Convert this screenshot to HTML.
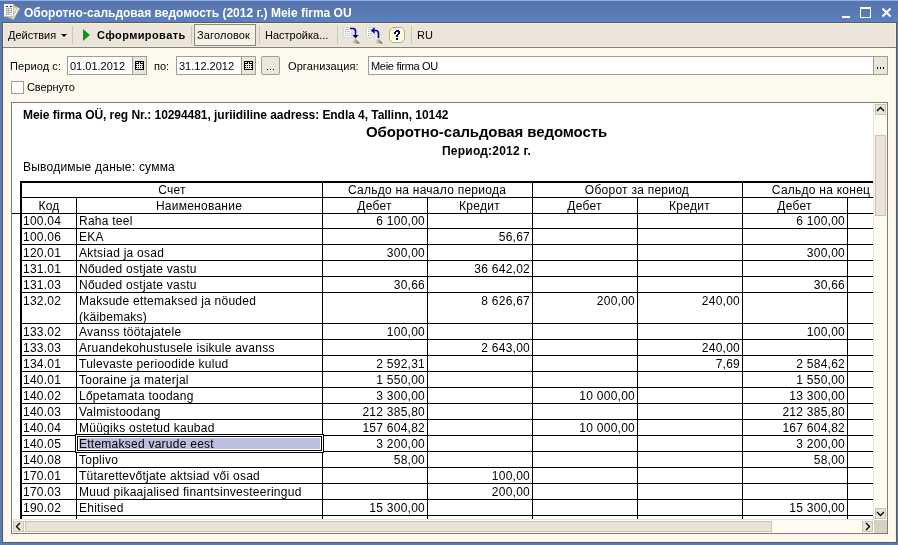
<!DOCTYPE html>
<html><head><meta charset="utf-8">
<style>
*{margin:0;padding:0;box-sizing:border-box}
html,body{width:898px;height:545px;overflow:hidden;background:#5b7cb6}
body{position:relative;font-family:"Liberation Sans",sans-serif;color:#000}
.a{position:absolute}
.t{position:absolute;white-space:nowrap;font-size:11px;line-height:13px}
.r{position:absolute;white-space:nowrap;font-size:12px;line-height:14px;letter-spacing:0.25px}
.hl{position:absolute;height:1px;background:#000}
.vl{position:absolute;width:1px;background:#000}
.num{text-align:right}
.sep{position:absolute;top:26px;width:1px;height:18px;background:#cbc6b6}
.t,.r{will-change:transform}
</style></head><body>

<div class="a" style="left:0;top:0;width:898px;height:1px;background:#8fb0ea"></div>
<div class="a" style="left:0;top:1px;width:898px;height:1px;background:#5775ad"></div>
<div class="a" style="left:0;top:2px;width:898px;height:20px;background:linear-gradient(#5874ad,#5a7bb5 60%,#5c7fc0)"></div>
<svg class="a" style="left:0;top:0" width="22" height="22" viewBox="0 0 22 22">
<path d="M14 5.5L19.8 8.6L13.6 19.4L8.2 17.4Z" fill="#f4f2ea" stroke="#b0a890" stroke-width="0.8"/>
<path d="M12 5L17 8.5L12 18L7 16Z" fill="#e8e6de" stroke="#a8a088" stroke-width="0.6"/>
<rect x="4" y="4" width="10" height="13" fill="#fbfbf6"/>
<path d="M4 16.5H14M13.5 4V17" stroke="#c8c0a8" stroke-width="1"/>
</svg>
<svg class="a" style="left:6px;top:6px" width="6" height="1" shape-rendering="crispEdges"><path d="M0 0h2v1h-2zM4 0h2v1h-2z" fill="#101090"/></svg>
<svg class="a" style="left:6px;top:8px" width="6" height="7" shape-rendering="crispEdges"><path d="M0 0h6v1h-6zM0 1h1v1h-1zM2 1h1v1h-1zM5 1h1v1h-1zM0 2h6v1h-6zM0 3h1v1h-1zM2 3h1v1h-1zM5 3h1v1h-1zM0 4h6v1h-6zM0 5h1v1h-1zM2 5h1v1h-1zM0 6h3v1h-3z" fill="#b4b4ae"/><path d="M3 6h3v1h-3z" fill="#d8d8d2"/></svg>
<div class="a" style="left:24px;top:5px;font-size:12px;line-height:16px;font-weight:bold;color:#fff;white-space:nowrap;will-change:transform">Оборотно-сальдовая ведомость (2012 г.) Meie firma OU</div>
<div class="a" style="left:842px;top:16px;width:8px;height:2px;background:#fff"></div>
<div class="a" style="left:860px;top:7px;width:11px;height:11px;border:1px solid #fff;border-top-width:2px"></div>
<svg class="a" style="left:881px;top:7px" width="11" height="11" viewBox="0 0 11 11"><path d="M1.5 1.5L9.5 9.5M9.5 1.5L1.5 9.5" stroke="#fff" stroke-width="2"/></svg>
<div class="a" style="left:2px;top:22px;width:895px;height:521px;background:#fef9ee;border:1px solid #5f5c55"></div>
<div class="a" style="left:3px;top:23px;width:893px;height:519px;border:1px solid #f5f0e4"></div>
<div class="a" style="left:4px;top:24px;width:891px;height:22px;background:#ebe5da"></div>
<div class="a" style="left:3px;top:46px;width:893px;height:1px;background:#efeadf"></div>
<div class="a" style="left:3px;top:47px;width:893px;height:1px;background:#858073"></div>
<div class="t" style="left:8px;top:29px">Действия</div>
<svg class="a" style="left:61px;top:34px" width="6" height="3"><path d="M0 0H6L3 3Z" fill="#000"/></svg>
<div class="sep" style="left:72px"></div>
<svg class="a" style="left:83px;top:29px" width="7" height="12"><path d="M0 0L7 6L0 12Z" fill="#17901a"/></svg>
<div class="t" style="left:97px;top:29px;font-weight:bold;letter-spacing:0.4px">Сформировать</div>
<div class="sep" style="left:191px"></div>
<div class="a" style="left:194px;top:24px;width:62px;height:22px;background:#f5f1e7;border:1px solid #8d897e"></div>
<div class="t" style="left:197px;top:29px;letter-spacing:0.15px">Заголовок</div>
<div class="sep" style="left:259px"></div>
<div class="t" style="left:265px;top:29px">Настройка...</div>
<div class="sep" style="left:337px"></div>
<svg class="a" style="left:342px;top:26px" width="20" height="19" viewBox="0 0 20 19">
<defs><linearGradient id="tg" x1="0" x2="1" y1="0" y2="0"><stop offset="0" stop-color="#f8f4c0"/><stop offset="0.5" stop-color="#b8b490"/><stop offset="1" stop-color="#505040"/></linearGradient></defs>
<rect x="1.5" y="1.5" width="8" height="10" fill="#fff" stroke="#d4d8dc" stroke-width="1"/>
<path d="M3 3.5H8" stroke="#c8c8c8"/>
<path d="M3 5.5H4M3 7.5H4M3 9.5H4" stroke="#40c0c8"/>
<path d="M5 5.5H8M5 7.5H8M5 9.5H8" stroke="#c8c8c8"/>
<path d="M8 2.5H11Q13.5 2.5 13.5 5V10" fill="none" stroke="#0000a0" stroke-width="1.6"/>
<path d="M10.5 9L16.5 9L13.5 12.5Z" fill="#0000a0"/>
<path d="M9 17.5L13.5 12.5L18 17.5Z" fill="url(#tg)"/>
</svg>
<svg class="a" style="left:365px;top:26px" width="20" height="19" viewBox="0 0 20 19">
<rect x="1.5" y="1.5" width="8" height="10" fill="#fff" stroke="#d4d8dc" stroke-width="1"/>
<path d="M3 3.5H8" stroke="#c8c8c8"/>
<path d="M3 5.5H4M3 7.5H4M3 9.5H4" stroke="#40c0c8"/>
<path d="M5 5.5H8M5 7.5H8M5 9.5H8" stroke="#c8c8c8"/>
<path d="M8 4.5H10.5Q13.5 4.5 13.5 7.5V12" fill="none" stroke="#0000a0" stroke-width="1.6"/>
<path d="M9.5 1L6 4.5L9.5 8Z" fill="#0000a0"/>
<path d="M9 17.5L13.5 12.5L18 17.5Z" fill="url(#tg)"/>
</svg>
<svg class="a" style="left:389px;top:27px" width="16" height="16" shape-rendering="crispEdges"><path d="M3 0h10v1h-10zM2 1h1v1h-1zM13 1h1v1h-1zM1 2h1v1h-1zM14 2h1v1h-1zM0 3h1v1h-1zM15 3h1v1h-1zM0 4h1v1h-1zM15 4h1v1h-1zM0 5h1v1h-1zM15 5h1v1h-1zM0 6h1v1h-1zM15 6h1v1h-1zM0 7h1v1h-1zM15 7h1v1h-1zM0 8h1v1h-1zM15 8h1v1h-1zM0 9h1v1h-1zM15 9h1v1h-1zM0 10h1v1h-1zM15 10h1v1h-1zM0 11h1v1h-1zM15 11h1v1h-1zM0 12h1v1h-1zM15 12h1v1h-1zM1 13h1v1h-1zM14 13h1v1h-1zM2 14h1v1h-1zM13 14h1v1h-1zM3 15h10v1h-10z" fill="#aeaca4"/><path d="M3 1h10v1h-10zM2 2h12v1h-12zM1 3h14v1h-14zM1 4h14v1h-14zM1 5h14v1h-14zM1 6h14v1h-14zM1 7h14v1h-14zM1 8h14v1h-14zM1 9h14v1h-14zM1 10h14v1h-14zM1 11h14v1h-14zM1 12h14v1h-14zM2 13h12v1h-12zM3 14h10v1h-10z" fill="#fefcd2"/></svg>
<svg class="a" style="left:394px;top:30px" width="7" height="10" shape-rendering="crispEdges"><path d="M2 0h3v1h-3zM1 1h5v1h-5zM0 2h2v1h-2zM4 2h2v1h-2zM0 3h2v1h-2zM4 3h2v1h-2zM3 4h2v1h-2zM2 5h2v1h-2zM2 6h2v1h-2zM2 8h2v1h-2zM2 9h2v1h-2z" fill="#000090"/></svg>
<div class="sep" style="left:411px"></div>
<div class="t" style="left:417px;top:29px">RU</div>
<div class="t" style="left:10px;top:60px;letter-spacing:0.1px">Период с:</div>
<div class="a" style="left:67px;top:56px;width:80px;height:19px;background:#fff;border:1px solid #a29d8c"></div>
<div class="a" style="left:132px;top:57px;width:14px;height:17px;background:#ebe6db;border-left:1px solid #a29d8c"></div>
<svg class="a" style="left:135px;top:61px" width="9" height="9" shape-rendering="crispEdges"><path d="M0 0h9v1h-9zM0 1h1v1h-1zM3 1h1v1h-1zM5 1h1v1h-1zM8 1h1v1h-1zM0 2h4v1h-4zM5 2h4v1h-4zM0 3h1v1h-1zM8 3h1v1h-1zM0 4h2v1h-2zM3 4h1v1h-1zM5 4h1v1h-1zM7 4h2v1h-2zM0 5h1v1h-1zM8 5h1v1h-1zM0 6h2v1h-2zM3 6h1v1h-1zM5 6h1v1h-1zM7 6h2v1h-2zM0 7h1v1h-1zM8 7h1v1h-1zM0 8h9v1h-9z" fill="#000"/><path d="M1 1h2v1h-2zM4 1h1v1h-1zM6 1h2v1h-2zM4 2h1v1h-1zM1 3h7v1h-7zM2 4h1v1h-1zM4 4h1v1h-1zM6 4h1v1h-1zM1 5h7v1h-7zM2 6h1v1h-1zM4 6h1v1h-1zM6 6h1v1h-1zM1 7h7v1h-7z" fill="#f2eee4"/></svg>
<div class="t" style="left:70px;top:60px">01.01.2012</div>
<div class="t" style="left:154px;top:60px">по:</div>
<div class="a" style="left:176px;top:56px;width:80px;height:19px;background:#fff;border:1px solid #a29d8c"></div>
<div class="a" style="left:241px;top:57px;width:14px;height:17px;background:#ebe6db;border-left:1px solid #a29d8c"></div>
<svg class="a" style="left:244px;top:61px" width="9" height="9" shape-rendering="crispEdges"><path d="M0 0h9v1h-9zM0 1h1v1h-1zM3 1h1v1h-1zM5 1h1v1h-1zM8 1h1v1h-1zM0 2h4v1h-4zM5 2h4v1h-4zM0 3h1v1h-1zM8 3h1v1h-1zM0 4h2v1h-2zM3 4h1v1h-1zM5 4h1v1h-1zM7 4h2v1h-2zM0 5h1v1h-1zM8 5h1v1h-1zM0 6h2v1h-2zM3 6h1v1h-1zM5 6h1v1h-1zM7 6h2v1h-2zM0 7h1v1h-1zM8 7h1v1h-1zM0 8h9v1h-9z" fill="#000"/><path d="M1 1h2v1h-2zM4 1h1v1h-1zM6 1h2v1h-2zM4 2h1v1h-1zM1 3h7v1h-7zM2 4h1v1h-1zM4 4h1v1h-1zM6 4h1v1h-1zM1 5h7v1h-7zM2 6h1v1h-1zM4 6h1v1h-1zM6 6h1v1h-1zM1 7h7v1h-7z" fill="#f2eee4"/></svg>
<div class="t" style="left:179px;top:60px">31.12.2012</div>
<div class="a" style="left:261px;top:56px;width:19px;height:19px;background:#ebe7dc;border:1px solid #a29d8c;border-radius:2px"></div>
<svg class="a" style="left:267px;top:69px" width="7" height="1" shape-rendering="crispEdges"><path d="M0 0h1v1h-1zM3 0h1v1h-1zM6 0h1v1h-1z" fill="#000"/></svg>
<div class="t" style="left:288px;top:60px;letter-spacing:0.1px">Организация:</div>
<div class="a" style="left:368px;top:56px;width:520px;height:19px;background:#fff;border:1px solid #a29d8c"></div>
<div class="a" style="left:873px;top:57px;width:14px;height:17px;background:#ebe6db;border-left:1px solid #a29d8c"></div>
<svg class="a" style="left:877px;top:67px" width="7" height="2" shape-rendering="crispEdges"><path d="M0 0h1v1h-1zM3 0h1v1h-1zM6 0h1v1h-1zM0 1h1v1h-1zM3 1h1v1h-1zM6 1h1v1h-1z" fill="#000"/></svg>
<div class="t" style="left:371px;top:60px;letter-spacing:-0.3px">Meie firma OU</div>
<div class="a" style="left:11px;top:81px;width:13px;height:13px;background:#fff;border:1px solid #a29d8c"></div>
<div class="t" style="left:27px;top:81px;letter-spacing:-0.1px">Свернуто</div>
<div class="a" style="left:11px;top:102px;width:877px;height:432px;background:#fff;border:1px solid #807c70"></div>
<div class="r" style="left:23px;top:108px;font-weight:bold;letter-spacing:-0.05px">Meie firma OÜ, reg Nr.: 10294481, juriidiline aadress: Endla 4, Tallinn, 10142</div>
<div class="r" style="left:366px;top:123px;font-size:15px;line-height:17px;font-weight:bold;letter-spacing:-0.1px">Оборотно-сальдовая ведомость</div>
<div class="r" style="left:442px;top:144px;font-weight:bold;letter-spacing:0.22px">Период:2012 г.</div>
<div class="r" style="left:23px;top:160px;letter-spacing:0.22px">Выводимые даные: сумма</div>
<div class="a" style="left:12px;top:103px;width:861px;height:416px;overflow:hidden">
<div class="a" style="left:8px;top:78px;width:2px;height:338px;background:#000"></div>
<div class="a" style="left:8px;top:78px;width:932px;height:2px;background:#000"></div>
<div class="hl" style="left:8px;top:94px;width:932px"></div>
<div class="hl" style="left:0px;top:110px;width:940px"></div>
<div class="hl" style="left:8px;top:125px;width:932px"></div>
<div class="hl" style="left:8px;top:141px;width:932px"></div>
<div class="hl" style="left:8px;top:157px;width:932px"></div>
<div class="hl" style="left:8px;top:173px;width:932px"></div>
<div class="hl" style="left:8px;top:189px;width:932px"></div>
<div class="hl" style="left:8px;top:220px;width:932px"></div>
<div class="hl" style="left:8px;top:236px;width:932px"></div>
<div class="hl" style="left:8px;top:252px;width:932px"></div>
<div class="hl" style="left:8px;top:268px;width:932px"></div>
<div class="hl" style="left:8px;top:284px;width:932px"></div>
<div class="hl" style="left:8px;top:300px;width:932px"></div>
<div class="hl" style="left:8px;top:316px;width:932px"></div>
<div class="hl" style="left:8px;top:332px;width:932px"></div>
<div class="hl" style="left:8px;top:348px;width:932px"></div>
<div class="hl" style="left:8px;top:364px;width:932px"></div>
<div class="hl" style="left:8px;top:380px;width:932px"></div>
<div class="hl" style="left:8px;top:396px;width:932px"></div>
<div class="hl" style="left:8px;top:412px;width:932px"></div>
<div class="vl" style="left:64px;top:94px;height:322px"></div>
<div class="vl" style="left:310px;top:78px;height:338px"></div>
<div class="vl" style="left:415px;top:94px;height:322px"></div>
<div class="vl" style="left:520px;top:78px;height:338px"></div>
<div class="vl" style="left:625px;top:94px;height:322px"></div>
<div class="vl" style="left:730px;top:78px;height:338px"></div>
<div class="vl" style="left:835px;top:94px;height:322px"></div>
<div class="r" style="left:10px;top:80px;width:300px;text-align:center;">Счет</div>
<div class="r" style="left:310px;top:80px;width:210px;text-align:center;">Сальдо на начало периода</div>
<div class="r" style="left:520px;top:80px;width:210px;text-align:center;">Оборот за период</div>
<div class="r" style="left:730px;top:80px;width:210px;text-align:center;">Сальдо на конец периода</div>
<div class="r" style="left:10px;top:96px;width:54px;text-align:center;">Код</div>
<div class="r" style="left:64px;top:96px;width:246px;text-align:center;">Наименование</div>
<div class="r" style="left:310px;top:96px;width:105px;text-align:center;">Дебет</div>
<div class="r" style="left:415px;top:96px;width:105px;text-align:center;">Кредит</div>
<div class="r" style="left:520px;top:96px;width:105px;text-align:center;">Дебет</div>
<div class="r" style="left:625px;top:96px;width:105px;text-align:center;">Кредит</div>
<div class="r" style="left:730px;top:96px;width:105px;text-align:center;">Дебет</div>
<div class="r" style="left:835px;top:96px;width:105px;text-align:center;">Кредит</div>
<div class="a" style="left:63px;top:331px;width:249px;height:19px;background:#000"></div>
<div class="a" style="left:64px;top:332px;width:247px;height:17px;background:#fff"></div>
<div class="a" style="left:65px;top:333px;width:245px;height:15px;background:#000"></div>
<div class="a" style="left:66px;top:334px;width:243px;height:13px;background:#fff"></div>
<div class="a" style="left:67px;top:335px;width:241px;height:11px;background:#bdbde0"></div>
<div class="r" style="left:11px;top:111px">100.04</div>
<div class="r" style="left:67px;top:111px;line-height:16px;margin-top:-1px">Raha teel</div>
<div class="r num" style="left:310px;top:111px;width:103px">6 100,00</div>
<div class="r num" style="left:730px;top:111px;width:103px">6 100,00</div>
<div class="r" style="left:11px;top:127px">100.06</div>
<div class="r" style="left:67px;top:127px;line-height:16px;margin-top:-1px">EKA</div>
<div class="r num" style="left:415px;top:127px;width:103px">56,67</div>
<div class="r" style="left:11px;top:143px">120.01</div>
<div class="r" style="left:67px;top:143px;line-height:16px;margin-top:-1px">Aktsiad ja osad</div>
<div class="r num" style="left:310px;top:143px;width:103px">300,00</div>
<div class="r num" style="left:730px;top:143px;width:103px">300,00</div>
<div class="r" style="left:11px;top:159px">131.01</div>
<div class="r" style="left:67px;top:159px;line-height:16px;margin-top:-1px">Nőuded ostjate vastu</div>
<div class="r num" style="left:415px;top:159px;width:103px">36 642,02</div>
<div class="r" style="left:11px;top:175px">131.03</div>
<div class="r" style="left:67px;top:175px;line-height:16px;margin-top:-1px">Nőuded ostjate vastu</div>
<div class="r num" style="left:310px;top:175px;width:103px">30,66</div>
<div class="r num" style="left:730px;top:175px;width:103px">30,66</div>
<div class="r" style="left:11px;top:191px">132.02</div>
<div class="r" style="left:67px;top:191px;line-height:16px;margin-top:-1px">Maksude ettemaksed ja nöuded<br>(käibemaks)</div>
<div class="r num" style="left:415px;top:191px;width:103px">8 626,67</div>
<div class="r num" style="left:520px;top:191px;width:103px">200,00</div>
<div class="r num" style="left:625px;top:191px;width:103px">240,00</div>
<div class="r" style="left:11px;top:222px">133.02</div>
<div class="r" style="left:67px;top:222px;line-height:16px;margin-top:-1px">Avanss töötajatele</div>
<div class="r num" style="left:310px;top:222px;width:103px">100,00</div>
<div class="r num" style="left:730px;top:222px;width:103px">100,00</div>
<div class="r" style="left:11px;top:238px">133.03</div>
<div class="r" style="left:67px;top:238px;line-height:16px;margin-top:-1px">Aruandekohustusele isikule avanss</div>
<div class="r num" style="left:415px;top:238px;width:103px">2 643,00</div>
<div class="r num" style="left:625px;top:238px;width:103px">240,00</div>
<div class="r" style="left:11px;top:254px">134.01</div>
<div class="r" style="left:67px;top:254px;line-height:16px;margin-top:-1px">Tulevaste perioodide kulud</div>
<div class="r num" style="left:310px;top:254px;width:103px">2 592,31</div>
<div class="r num" style="left:625px;top:254px;width:103px">7,69</div>
<div class="r num" style="left:730px;top:254px;width:103px">2 584,62</div>
<div class="r" style="left:11px;top:270px">140.01</div>
<div class="r" style="left:67px;top:270px;line-height:16px;margin-top:-1px">Tooraine ja materjal</div>
<div class="r num" style="left:310px;top:270px;width:103px">1 550,00</div>
<div class="r num" style="left:730px;top:270px;width:103px">1 550,00</div>
<div class="r" style="left:11px;top:286px">140.02</div>
<div class="r" style="left:67px;top:286px;line-height:16px;margin-top:-1px">Lőpetamata toodang</div>
<div class="r num" style="left:310px;top:286px;width:103px">3 300,00</div>
<div class="r num" style="left:520px;top:286px;width:103px">10 000,00</div>
<div class="r num" style="left:730px;top:286px;width:103px">13 300,00</div>
<div class="r" style="left:11px;top:302px">140.03</div>
<div class="r" style="left:67px;top:302px;line-height:16px;margin-top:-1px">Valmistoodang</div>
<div class="r num" style="left:310px;top:302px;width:103px">212 385,80</div>
<div class="r num" style="left:730px;top:302px;width:103px">212 385,80</div>
<div class="r" style="left:11px;top:318px">140.04</div>
<div class="r" style="left:67px;top:318px;line-height:16px;margin-top:-1px">Müügiks ostetud kaubad</div>
<div class="r num" style="left:310px;top:318px;width:103px">157 604,82</div>
<div class="r num" style="left:520px;top:318px;width:103px">10 000,00</div>
<div class="r num" style="left:730px;top:318px;width:103px">167 604,82</div>
<div class="r" style="left:11px;top:334px">140.05</div>
<div class="r" style="left:67px;top:334px;line-height:16px;margin-top:-1px">Ettemaksed varude eest</div>
<div class="r num" style="left:310px;top:334px;width:103px">3 200,00</div>
<div class="r num" style="left:730px;top:334px;width:103px">3 200,00</div>
<div class="r" style="left:11px;top:350px">140.08</div>
<div class="r" style="left:67px;top:350px;line-height:16px;margin-top:-1px">Toplivo</div>
<div class="r num" style="left:310px;top:350px;width:103px">58,00</div>
<div class="r num" style="left:730px;top:350px;width:103px">58,00</div>
<div class="r" style="left:11px;top:366px">170.01</div>
<div class="r" style="left:67px;top:366px;line-height:16px;margin-top:-1px">Tütarettevőtjate aktsiad vői osad</div>
<div class="r num" style="left:415px;top:366px;width:103px">100,00</div>
<div class="r" style="left:11px;top:382px">170.03</div>
<div class="r" style="left:67px;top:382px;line-height:16px;margin-top:-1px">Muud pikaajalised finantsinvesteeringud</div>
<div class="r num" style="left:415px;top:382px;width:103px">200,00</div>
<div class="r" style="left:11px;top:398px">190.02</div>
<div class="r" style="left:67px;top:398px;line-height:16px;margin-top:-1px">Ehitised</div>
<div class="r num" style="left:310px;top:398px;width:103px">15 300,00</div>
<div class="r num" style="left:730px;top:398px;width:103px">15 300,00</div>
</div>
<div class="a" style="left:873px;top:103px;width:14px;height:417px;background:#fdfbf2;border-left:1px solid #ebe6db"></div>
<div class="a" style="left:875px;top:104px;width:11px;height:11px;background:#e9e3d9;border:1px solid #c9c4b6"></div>
<svg class="a" style="left:875px;top:104px" width="11" height="11" viewBox="0 0 11 11"><path d="M2 7L5.5 3.5L9 7" fill="none" stroke="#000" stroke-width="1.3"/></svg>
<div class="a" style="left:875px;top:135px;width:11px;height:81px;background:#e9e3d9;border:1px solid #c9c4b6"></div>
<div class="a" style="left:875px;top:508px;width:11px;height:11px;background:#e9e3d9;border:1px solid #c9c4b6"></div>
<svg class="a" style="left:875px;top:508px" width="11" height="11" viewBox="0 0 11 11"><path d="M2 4L5.5 7.5L9 4" fill="none" stroke="#000" stroke-width="1.3"/></svg>
<div class="a" style="left:12px;top:519px;width:862px;height:14px;background:#fdfbf2;border-top:1px solid #ebe6db"></div>
<div class="a" style="left:13px;top:521px;width:11px;height:11px;background:#e9e3d9;border:1px solid #c9c4b6"></div>
<svg class="a" style="left:13px;top:521px" width="11" height="11" viewBox="0 0 11 11"><path d="M7 2L3.5 5.5L7 9" fill="none" stroke="#000" stroke-width="1.3"/></svg>
<div class="a" style="left:25px;top:521px;width:747px;height:11px;background:#e9e3d9;border:1px solid #c9c4b6"></div>
<div class="a" style="left:862px;top:521px;width:11px;height:11px;background:#e9e3d9;border:1px solid #c9c4b6"></div>
<svg class="a" style="left:862px;top:521px" width="11" height="11" viewBox="0 0 11 11"><path d="M4 2L7.5 5.5L4 9" fill="none" stroke="#000" stroke-width="1.3"/></svg>
<div class="a" style="left:874px;top:520px;width:13px;height:13px;background:#d5d0c3"></div>
</body></html>
